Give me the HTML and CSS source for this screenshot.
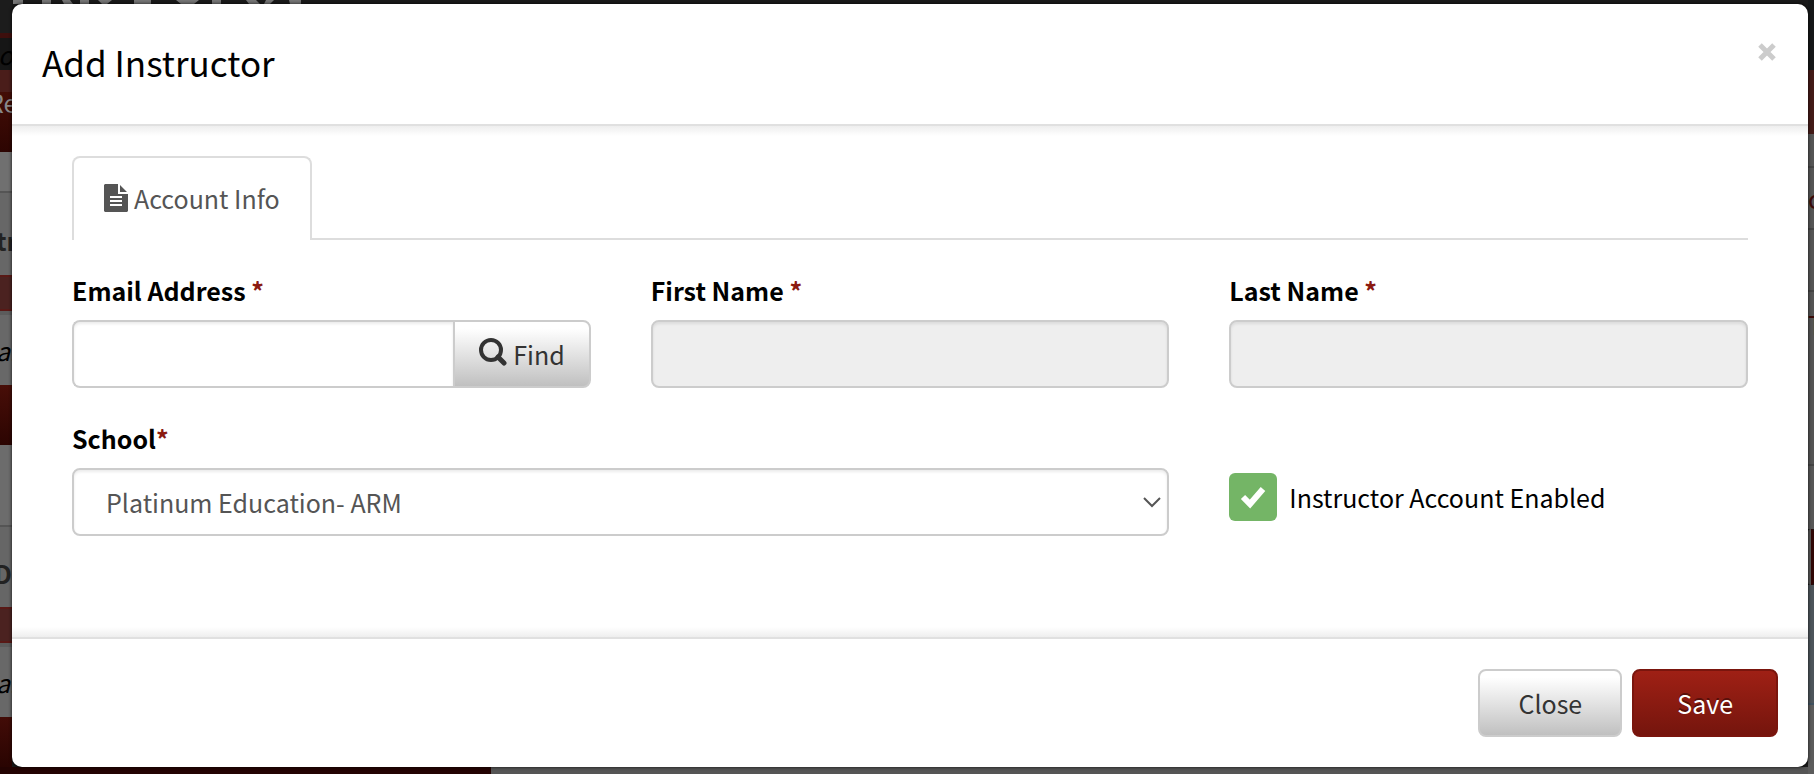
FILE: index.html
```html
<!DOCTYPE html>
<html lang="en">
<head>
<meta charset="utf-8">
<title>Add Instructor</title>
<link rel="stylesheet" href="styles.css">
</head>
<body>
<div class="page" aria-hidden="true">
  <svg class="page-logo" viewBox="0 0 310 4" width="310" height="4"><path fill="#777" d="M13 0h10v4H13zM42 0h9v4h-9zM62 0h8l3 4h-9zM80 0h9v4h-9zM98 0h14l-5 4h-5zM134 0h17v4h-17zM176 0h23l-5 4h-13zM212 0h9v4h-9zM246 0h10l4 4h-11zM266 0h8l-4 4h-6zM289 0h12v4h-11z"/></svg>
  <div class="side side-left">
    <div class="band l-top"></div>
    <div class="band l-sub"><i>o</i></div>
    <div class="band l-nav"><span>Re</span></div>
    <div class="band l-gap"></div>
    <div class="band l-head"><b>tr</b></div>
    <div class="band l-rose"></div>
    <div class="band l-row"><i>a.</i></div>
    <div class="band l-foot"></div>
    <div class="band l-space"></div>
    <div class="band l-title"><b>D</b></div>
    <div class="band l-rose"></div>
    <div class="band l-row"><i>a.</i></div>
    <div class="band l-end"></div>
  </div>
  <div class="bottom"></div>
  <div class="side side-right">
    <div class="band r-top"></div>
    <div class="band r-nav"></div>
    <div class="band r-a"></div>
    <div class="band r-b">c</div>
    <div class="band r-b"></div>
    <div class="band r-c">Te</div>
    <div class="band r-d"></div>
    <div class="band r-e"></div>
    <div class="band r-f"></div>
    <div class="band r-end"></div>
  </div>
</div>

<form class="modal" role="dialog" aria-labelledby="dialog-title">
  <header class="modal-header">
    <h1 class="modal-title" id="dialog-title">Add Instructor</h1>
    <button class="dismiss" type="button" aria-label="Dismiss"><svg viewBox="0 0 20 20" width="20" height="20"><path d="M3 3l14 14M17 3L3 17" stroke="currentColor" stroke-width="5"/></svg></button>
  </header>
  <div class="modal-body">
    <nav class="tabs">
      <a class="tab" href="#account">
        <svg viewBox="0 0 24 28" width="24" height="28"><path fill="currentColor" fill-rule="evenodd" d="M1 0H14V10H24V27L23 28H1L0 27V1zM6 12V14H18V12zM6 16V18H18V16zM6 20V22H18V20zM16 1L23 8H16z"/></svg>
        Account Info
      </a>
    </nav>
    <div class="fields" id="account">
      <div class="field">
        <label for="email">Email Address <span class="req">*</span></label>
        <div class="group">
          <input class="control" id="email" type="text">
          <button class="btn find" type="button"><svg viewBox="0 0 28 32" width="28" height="32"><circle cx="12" cy="12" r="10" fill="none" stroke="currentColor" stroke-width="4"/><path d="M19 19l6 6" stroke="currentColor" stroke-width="5" stroke-linecap="round"/></svg>Find</button>
        </div>
      </div>
      <div class="field">
        <label for="first">First Name <span class="req">*</span></label>
        <input class="control" id="first" type="text" disabled>
      </div>
      <div class="field">
        <label for="last">Last Name <span class="req">*</span></label>
        <input class="control" id="last" type="text" disabled>
      </div>
      <div class="field wide">
        <label for="school">School<span class="req">*</span></label>
        <div class="select-wrap">
          <select class="control" id="school"><option>Platinum Education- ARM</option></select>
          <svg class="chevron" viewBox="0 0 18 12" width="18" height="12"><path d="M1 2l8 8 8-8" fill="none" stroke="currentColor" stroke-width="2"/></svg>
        </div>
      </div>
      <label class="check">
        <span class="check-box"><input type="checkbox" checked><svg viewBox="0 0 26 24" width="26" height="24"><path d="M3 12l7 7L23 4" fill="none" stroke="currentColor" stroke-width="6"/></svg></span>
        Instructor Account Enabled
      </label>
    </div>
  </div>
  <footer class="modal-footer">
    <button class="btn" type="button">Close</button>
    <button class="btn primary" type="submit">Save</button>
  </footer>
</form>
</body>
</html>
```
FILE: styles.css
```css
* { box-sizing: border-box; }
body {
  margin: 0;
  min-height: 100vh;
  padding: 4px 6px 7px 12px;
  display: flex;
  overflow: hidden;
  background: #1a1a1a;
  font: 25px/36px "Noto Sans CJK SC", "Open Sans", sans-serif;
  color: #000;
}
button, input, select { font: inherit; }

/* Dimmed page behind the dialog */
.page { position: absolute; inset: 0; overflow: hidden; background: #1a1a1a; }
.page-logo { position: absolute; top: 0; left: 0; }
.side { position: absolute; top: 0; bottom: 0; width: 12px; display: flex; flex-direction: column; }
.side-left { left: 0; color: #222; }
.side-right { right: 0; width: 6px; color: #3c0a08; }
.band { overflow: hidden; white-space: nowrap; flex: none; display: flex; align-items: center; }
.l-top { height: 33px; background: #1c1c1c; }
.l-sub { height: 37px; background: #161616; border-top: 5px solid #3d0f0d; color: #000; }
.l-sub i { margin-left: -2px; }
.l-nav { height: 82px; background: linear-gradient(#4a1d1a 0 22px, #430d06 22px, #2d0502); color: #888; }
.l-nav span { margin: -18px 0 0 -12px; }
.l-gap { height: 41px; background: #707070; border-bottom: 2px solid #555; }
.l-head { height: 82px; background: #676767; }
.l-head b { margin: 12px 0 0 -4px; }
.l-rose { height: 36px; background: #4b2220; border: solid #591916; border-width: 2px 0; }
.l-row { height: 74px; background: #686868; border-top: 4px solid #5c5c5c; color: #000; }
.l-row i { margin-left: -4px; }
.l-foot { height: 60px; background: linear-gradient(#480e08, #2c0502); }
.l-space { height: 82px; background: #6c6c6c; border-bottom: 2px solid #555; }
.l-title { height: 80px; background: #666; }
.l-title b { margin: 12px 0 0 -6px; }
.l-end { flex: 1; background: linear-gradient(#420c07, #260301); }
.bottom {
  position: absolute;
  inset: auto 0 0 0;
  height: 7px;
  background: linear-gradient(90deg, #240302 0 491px, #555 491px);
}
.r-top { height: 70px; background: #151718; }
.r-nav { height: 64px; background: #431a17; }
.r-a { height: 34px; background: #555; border-bottom: 2px solid #444; }
.r-b { height: 62px; background: #555; border-bottom: 2px solid #444; }
.r-c { height: 174px; background: #545454; border-bottom: 2px solid #444; align-items: flex-start; padding-top: 14px; }
.r-d { height: 63px; background: #575757; }
.r-e { height: 56px; background: #2f0504; border-left: 3px solid #555; border-radius: 6px; }
.r-f { height: 120px; background: #4d555b; border-bottom: 2px solid #405260; }
.r-end { flex: 1; background: #5c5c5c; }

/* Dialog */
.modal {
  position: relative;
  flex: 1;
  display: flex;
  flex-direction: column;
  background: #fff;
  border-radius: 10px;
  box-shadow: 0 0 3px 1px rgba(0, 0, 0, .5);
}
.modal-header {
  display: flex;
  justify-content: space-between;
  align-items: flex-start;
  padding: 28px 30px 32px;
}
.modal-title { margin: 0; font-size: 35px; font-weight: 400; line-height: 60px; }
.dismiss {
  display: flex;
  margin: 0;
  padding: 10px 1px;
  border: 0;
  background: none;
  color: #ccc;
}
.modal-body {
  flex: 1;
  padding: 30px 60px;
  border: solid #e0e0e0;
  border-width: 2px 0;
  background:
    linear-gradient(#eee, #fff) top / 100% 10px no-repeat,
    linear-gradient(#fff, #eee) bottom / 100% 10px no-repeat;
}
.tabs { display: flex; border-bottom: 2px solid #ddd; }
.tab {
  display: flex;
  align-items: center;
  gap: 6px;
  height: 84px;
  margin-bottom: -2px;
  padding: 0 30px 2px;
  border: 2px solid #ddd;
  border-bottom: 0;
  border-radius: 8px 8px 0 0;
  background: #fff;
  color: #555;
  text-decoration: none;
}
.fields {
  display: grid;
  grid-template-columns: repeat(3, minmax(0, 1fr));
  gap: 32px 60px;
  padding-top: 32px;
}
.field { display: flex; flex-direction: column; gap: 12px; }
.field label { font-weight: 700; }
.wide { grid-column: span 2; }
.req { color: #8b1a10; }
.control {
  width: 100%;
  height: 68px;
  padding: 0 32px;
  border: 2px solid #ccc;
  border-radius: 8px;
  background: #fff;
  box-shadow: inset 0 2px 3px rgba(0, 0, 0, .08);
  color: #555;
}
.control:disabled { background: #eee; }
.group { display: flex; }
.group .control { flex: 1; min-width: 0; border-right: 0; border-radius: 8px 0 0 8px; }
.select-wrap { position: relative; }
select.control { appearance: none; }
.chevron { position: absolute; right: 8px; top: 28px; color: #555; pointer-events: none; }
.btn {
  height: 68px;
  padding: 0 38px;
  border: 2px solid #ccc;
  border-radius: 8px;
  background: linear-gradient(#fff 10%, #c0c0c0);
  color: #333;
}
.find { display: flex; align-items: center; gap: 6px; padding: 0 24px; border-radius: 0 8px 8px 0; }
.primary {
  padding: 0 43px;
  border-color: #7a150d;
  background: linear-gradient(#9f2015, #75150d);
  color: #fff;
  text-shadow: 0 -2px 0 rgba(0, 0, 0, .4);
}
.check { align-self: end; display: flex; align-items: center; gap: 12px; height: 78px; }
.check-box { display: grid; place-items: center; width: 48px; height: 48px; border-radius: 6px; background: #74b566; color: #fff; }
.check-box input, .check-box svg { grid-area: 1 / 1; }
.check-box input { appearance: none; width: 48px; height: 48px; margin: 0; }
.modal-footer { display: flex; justify-content: flex-end; gap: 10px; padding: 30px; }
```
